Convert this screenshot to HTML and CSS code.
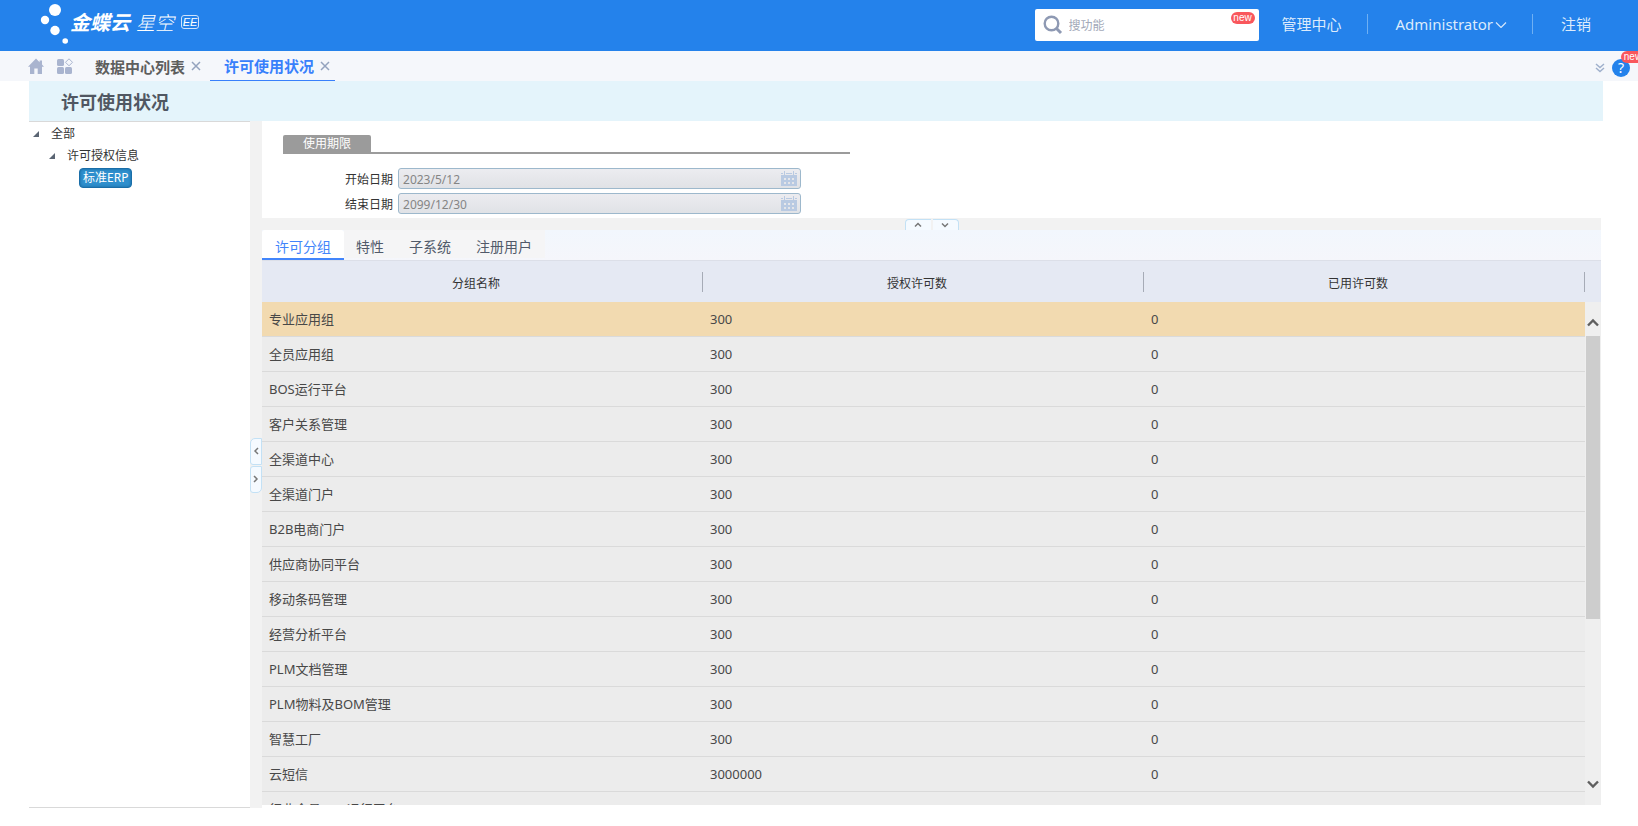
FILE: index.html
```
<!DOCTYPE html>
<html lang="zh-CN">
<head>
    <meta charset="UTF-8">
    <meta name="viewport" content="width=device-width, initial-scale=1.0">
    <title>许可使用状况</title>
    <link rel="stylesheet" href="styles.css">
</head>
<body>
    <!-- 顶部导航 -->
    <header class="header">
        <div class="logo">
            <svg class="logo-dots" width="28" height="44" viewBox="0 0 28 44" fill="#fff">
                <circle cx="15" cy="7" r="6"/>
                <circle cx="5" cy="17" r="4.2"/>
                <circle cx="15" cy="27.5" r="4.7"/>
                <circle cx="25.2" cy="38" r="2.8"/>
            </svg>
            <span class="logo-main">金蝶云</span>
            <span class="logo-sub">星空</span>
            <span class="logo-ee">EE</span>
        </div>
        <label class="search">
            <svg width="20" height="20" viewBox="0 0 20 20" fill="none" stroke="#8e99b3" stroke-width="2.4">
                <circle cx="8.5" cy="8.5" r="6.8"/>
                <path d="M13.5 13.5 L18 18" stroke-width="3"/>
            </svg>
            <input type="text" placeholder="搜功能" aria-label="搜功能">
            <span class="new search-new">new</span>
        </label>
        <nav class="user-nav">
            <a href="#">管理中心</a>
            <a href="#">Administrator
                <svg width="12" height="8" viewBox="0 0 12 8" fill="none" stroke="#d3e6fb" stroke-width="1.2"><path d="M1 2.5 L6 7.5 L11 2.5"/></svg>
            </a>
            <a href="#">注销</a>
        </nav>
    </header>

    <!-- 页签栏 -->
    <div class="page-tabs">
        <svg class="home" width="17" height="17" viewBox="0 0 17 17" fill="#a9b4cf"><path d="M8 0.5 L0 8.7 H2 V16 H6.3 V10.5 H9.7 V16 H14 V8.7 H16 L14 6.6 V2.5 H11.6 V4.2 Z"/></svg>
        <svg class="apps" width="17" height="17" viewBox="0 0 17 17" fill="#a9b4cf">
            <rect x="0" y="1" width="7" height="7" rx="1.5"/>
            <rect x="0" y="9" width="7" height="7" rx="1.5"/>
            <rect x="8" y="9" width="7" height="7" rx="1.5"/>
            <path d="M12 0.8 L15.5 4.3 L12 7.8 L8.5 4.3 Z" fill="none" stroke="#a9b4cf"/>
        </svg>
        <div class="page-tab">
            <a href="#">数据中心列表</a>
            <button type="button" aria-label="关闭"><svg width="10" height="10" viewBox="0 0 10 10" stroke="#94a3be" stroke-width="1.5"><path d="M1 1 L9 9 M9 1 L1 9"/></svg></button>
        </div>
        <div class="page-tab on">
            <a href="#">许可使用状况</a>
            <button type="button" aria-label="关闭"><svg width="10" height="10" viewBox="0 0 10 10" stroke="#94a3be" stroke-width="1.5"><path d="M1 1 L9 9 M9 1 L1 9"/></svg></button>
        </div>
        <div class="page-tools">
            <svg width="10" height="10" viewBox="0 0 10 10" fill="none" stroke="#9fb0cc" stroke-width="1.5"><path d="M1 1 L5 4.5 L9 1 M1 5 L5 8.5 L9 5"/></svg>
            <button type="button" class="help">?<span class="new help-new">new</span></button>
        </div>
    </div>

    <main class="main">
        <h1 class="title">许可使用状况</h1>
        <div class="content">
            <!-- 左侧树 -->
            <ul class="tree">
                <li><i class="arrow"></i>全部
                    <ul>
                        <li><i class="arrow"></i>许可授权信息
                            <ul>
                                <li><a href="#" class="selected">标准ERP</a></li>
                            </ul>
                        </li>
                    </ul>
                </li>
            </ul>

            <div class="split-v">
                <button type="button" aria-label="收起"><svg width="6" height="8" viewBox="0 0 6 8" fill="none" stroke="#777" stroke-width="1.5"><path d="M5 1 L2 4 L5 7"/></svg></button>
                <button type="button" aria-label="展开"><svg width="6" height="8" viewBox="0 0 6 8" fill="none" stroke="#777" stroke-width="1.5"><path d="M1 1 L4 4 L1 7"/></svg></button>
            </div>

            <section class="right">
                <form class="period">
                    <div class="legend"><span>使用期限</span></div>
                    <div class="field">
                        <label for="start">开始日期</label>
                        <div class="date">
                            <input type="text" id="start" value="2023/5/12" disabled>
                            <svg width="16" height="16"><use href="#calendar"/></svg>
                        </div>
                    </div>
                    <div class="field">
                        <label for="end">结束日期</label>
                        <div class="date">
                            <input type="text" id="end" value="2099/12/30" disabled>
                            <svg width="16" height="16"><use href="#calendar"/></svg>
                        </div>
                    </div>
                </form>

                <div class="split-h">
                    <button type="button" aria-label="收起"><svg width="8" height="6" viewBox="0 0 8 6" fill="none" stroke="#777" stroke-width="1.5"><path d="M1 4.5 L4 1.5 L7 4.5"/></svg></button>
                    <button type="button" aria-label="展开"><svg width="8" height="6" viewBox="0 0 8 6" fill="none" stroke="#777" stroke-width="1.5"><path d="M1 1.5 L4 4.5 L7 1.5"/></svg></button>
                </div>

                <div class="tabs">
                    <button type="button" class="on">许可分组</button>
                    <button type="button">特性</button>
                    <button type="button">子系统</button>
                    <button type="button">注册用户</button>
                </div>

                <div class="grid">
                    <div class="grid-body">
                        <table>
                            <thead>
                                <tr><th>分组名称</th><th>授权许可数</th><th>已用许可数</th></tr>
                            </thead>
                            <tbody>
                                <tr class="current"><td>专业应用组</td><td>300</td><td>0</td></tr>
                                <tr><td>全员应用组</td><td>300</td><td>0</td></tr>
                                <tr><td>BOS运行平台</td><td>300</td><td>0</td></tr>
                                <tr><td>客户关系管理</td><td>300</td><td>0</td></tr>
                                <tr><td>全渠道中心</td><td>300</td><td>0</td></tr>
                                <tr><td>全渠道门户</td><td>300</td><td>0</td></tr>
                                <tr><td>B2B电商门户</td><td>300</td><td>0</td></tr>
                                <tr><td>供应商协同平台</td><td>300</td><td>0</td></tr>
                                <tr><td>移动条码管理</td><td>300</td><td>0</td></tr>
                                <tr><td>经营分析平台</td><td>300</td><td>0</td></tr>
                                <tr><td>PLM文档管理</td><td>300</td><td>0</td></tr>
                                <tr><td>PLM物料及BOM管理</td><td>300</td><td>0</td></tr>
                                <tr><td>智慧工厂</td><td>300</td><td>0</td></tr>
                                <tr><td>云短信</td><td>3000000</td><td>0</td></tr>
                                <tr><td>行业全员BOS运行平台</td><td>300</td><td>0</td></tr>
                            </tbody>
                        </table>
                    </div>
                    <div class="scrollbar">
                        <svg width="12" height="10" viewBox="0 0 12 10" fill="none" stroke="#5f5f5f" stroke-width="2.4"><path d="M1 7.5 L6 2.5 L11 7.5"/></svg>
                        <div class="track"><div class="thumb"></div></div>
                        <svg width="12" height="10" viewBox="0 0 12 10" fill="none" stroke="#5f5f5f" stroke-width="2.4"><path d="M1 2.5 L6 7.5 L11 2.5"/></svg>
                    </div>
                </div>
            </section>
        </div>
    </main>

    <svg class="defs" width="0" height="0">
        <symbol id="calendar" viewBox="0 0 16 16">
            <path fill="#b9cae2" fill-rule="evenodd" d="M0 4 H16 V15 H0 Z M3 7 V9 H5 V7 Z M7 7 V9 H9 V7 Z M11 7 V9 H13 V7 Z M3 11 V13 H5 V11 Z M7 11 V13 H9 V11 Z M11 11 V13 H13 V11 Z"/>
            <path fill="#b9cae2" d="M0 2 H2 V3 H0 Z M3 0 H4 V4 H3 Z M5 2 H11 V3 H5 Z M12 0 H13 V4 H12 Z M14 2 H16 V3 H14 Z"/>
        </symbol>
    </svg>
</body>
</html>
```
FILE: styles.css
```
*{
    box-sizing: border-box;
}
body{
    margin: 0;
    height: 100vh;
    display: flex;
    flex-direction: column;
    overflow: hidden;
    background-color: #fff;
    color: #333;
    font-family: "Noto Sans", "Noto Sans CJK SC", sans-serif;
    font-size: 12px;
}
a{
    color: inherit;
    text-decoration: none;
}
button, input{
    font: inherit;
    color: inherit;
    border: 0;
    padding: 0;
    margin: 0;
    background: none;
}
ul{
    list-style: none;
    margin: 0;
    padding: 0;
}
svg{
    display: block;
    flex-shrink: 0;
}
.defs{
    position: absolute;
}
.new{
    width: 24px;
    height: 12px;
    border-radius: 6px;
    background-color: #f9575c;
    color: #fff;
    font: 10px/11px "Liberation Sans", sans-serif;
    text-align: center;
}

/* 顶部导航 */
.header{
    flex: none;
    height: 51px;
    display: flex;
    align-items: center;
    padding: 0 32px 0 40px;
    background-color: #2482eb;
    color: #fff;
}
.logo{
    display: flex;
    align-items: flex-start;
    margin-right: auto;
    height: 46px;
    font-family: "Noto Sans CJK SC", sans-serif;
    font-style: italic;
    line-height: 38px;
}
.logo-main{
    margin-left: 2px;
    font-size: 20px;
    font-weight: bold;
}
.logo-sub{
    margin-left: 6px;
    font-size: 19px;
    font-weight: 300;
}
.logo-ee{
    margin: 12px 0 0 7px;
    width: 18px;
    height: 14px;
    border: 1px solid #cfe3fb;
    border-radius: 3px;
    font: italic 11px/12px "Liberation Sans", sans-serif;
    text-align: center;
}
.search{
    position: relative;
    display: flex;
    align-items: center;
    width: 224px;
    height: 32px;
    margin-bottom: 1px;
    padding-left: 8px;
    border-radius: 2px;
    background-color: #fff;
}
.search input{
    width: 140px;
    margin-left: 6px;
    color: #333;
    outline: none;
}
.search input::placeholder{
    color: #a3a9b8;
}
.search-new{
    position: absolute;
    top: 3px;
    right: 4px;
}
.user-nav{
    display: flex;
    align-items: center;
    margin-bottom: 3px;
    color: #dcebfc;
    font-size: 15px;
    line-height: 20px;
}
.user-nav a{
    display: flex;
    align-items: center;
    gap: 2px;
    padding: 0 25px 0 28px;
    border-left: 1px solid #6fb0f3;
}
.user-nav a:first-child{
    padding: 0 25px 0 23px;
    border-left: 0;
}
.user-nav a:last-child{
    padding-right: 15px;
}

/* 页签栏 */
.page-tabs{
    flex: none;
    height: 30px;
    display: flex;
    align-items: center;
    padding-left: 28px;
    background-color: #f5f7fb;
}
.apps{
    margin: 0 12px;
}
.page-tab{
    display: flex;
    align-items: center;
    gap: 6px;
    height: 30px;
    margin-right: 4px;
    padding: 0 5px 0 9px;
    color: #5e5e5e;
    font-size: 15px;
    font-weight: bold;
}
.page-tab.on{
    height: 31px;
    margin-top: 1px;
    padding-left: 14px;
    border-bottom: 2px solid #3880fb;
    color: #3880fb;
}
.page-tools{
    display: flex;
    align-items: center;
    gap: 7px;
    margin-left: auto;
    padding: 4px 8px 0 0;
}
.help{
    position: relative;
    width: 18px;
    height: 18px;
    border-radius: 50%;
    background-color: #2482eb;
    color: #fff;
    font-size: 14px;
    line-height: 18px;
}
.help-new{
    position: absolute;
    left: 9px;
    top: -8px;
}

/* 内容区 */
.main{
    flex: 1;
    min-height: 0;
    display: flex;
    flex-direction: column;
    margin: 0 35px 18px 29px;
}
.title{
    flex: none;
    height: 40px;
    margin: 0;
    padding: 1px 0 0 32px;
    background-color: #e4f4fb;
    color: #505762;
    font-size: 18px;
    line-height: 40px;
}
.content{
    flex: 1;
    min-height: 0;
    display: flex;
    padding-right: 2px;
}
.tree{
    width: 221px;
    padding: 1px 0 0 4px;
    border-top: 1px solid #d9d9d9;
    border-bottom: 1px solid #d9d9d9;
    line-height: 22px;
}
.tree ul{
    padding-left: 16px;
}
.tree ul ul{
    padding-left: 30px;
}
.arrow{
    display: inline-block;
    margin-right: 12px;
    border-left: 6px solid transparent;
    border-bottom: 6px solid #5b6573;
    vertical-align: 1px;
}
.selected{
    display: inline-block;
    height: 20px;
    padding: 0 3px;
    border: 1px solid #1a6ea8;
    border-radius: 4px;
    background-color: #2f8fcd;
    box-shadow: inset 0 0 3px #14649c;
    color: #fff;
    line-height: 18px;
}

/* 分隔条 */
.split-v{
    width: 12px;
    display: flex;
    flex-direction: column;
    justify-content: center;
    gap: 1px;
    padding-top: 1px;
    background-color: #f2f2f2;
}
.split-v button, .split-h button{
    display: flex;
    align-items: center;
    justify-content: center;
    border: 1px solid #c3e1f5;
    background-color: #f5faff;
}
.split-v button{
    height: 27px;
    border-radius: 5px 0 0 3px;
}
.split-v button + button{
    border-radius: 3px 0 5px 3px;
}
.split-h{
    flex: none;
    height: 12px;
    display: flex;
    align-items: flex-end;
    justify-content: center;
    gap: 2px;
    background-color: #f2f2f2;
}
.split-h button{
    width: 26px;
    height: 11px;
    border-width: 1px 0 0 1px;
    border-radius: 4px 0 0 0;
}
.split-h button + button{
    border-width: 1px 1px 0 0;
    border-radius: 0 4px 0 0;
}

/* 使用期限 */
.right{
    flex: 1;
    min-width: 0;
    display: flex;
    flex-direction: column;
    padding-bottom: 3px;
}
.period{
    flex: none;
    height: 97px;
    padding: 14px 21px 0;
}
.legend{
    max-width: 567px;
    margin-bottom: 14px;
    border-bottom: 2px solid #9b9b9b;
}
.legend span{
    display: block;
    width: 88px;
    height: 17px;
    border-radius: 2px 2px 0 0;
    background-color: #9b9b9b;
    color: #fff;
    line-height: 18px;
    text-align: center;
}
.field{
    display: flex;
    align-items: center;
    gap: 5px;
    margin-bottom: 4px;
    padding-left: 62px;
}
.field label{
    padding-top: 1px;
}
.date{
    display: flex;
    align-items: center;
    width: 403px;
    height: 21px;
    padding: 1px 3px 0 4px;
    border: 1px solid #9db8cc;
    border-radius: 3px;
    background: linear-gradient(#ececf0, #e0e2e6);
}
.date input{
    flex: 1;
    color: #858585;
}

/* 页签 */
.tabs{
    flex: none;
    display: flex;
    height: 31px;
    border-bottom: 1px solid #dcdfe8;
    background: linear-gradient(#f2f7fd, #f5f6fb);
}
.tabs button{
    height: 28px;
    padding: 5px 13px 0 12px;
    background-color: #f5f5f6;
    color: #515a6a;
    font-size: 14px;
    line-height: 23px;
}
.tabs .on{
    height: 30px;
    padding: 5px 13px 0;
    border-bottom: 2px solid #4285fb;
    border-radius: 3px 3px 0 0;
    background-color: #fff;
    color: #4285fb;
}

/* 表格 */
.grid{
    flex: 1;
    min-height: 0;
    display: flex;
    background: linear-gradient(#e5e9f3 41px, #efefef 41px);
}
.grid-body{
    flex: 1;
    overflow: hidden;
}
table{
    width: 100%;
    table-layout: fixed;
    border-collapse: separate;
    border-spacing: 0;
}
th{
    height: 41px;
    padding: 2px 13px 0 0;
    background: linear-gradient(#a6abb6, #a6abb6) no-repeat right center / 1px 20px #e5e9f3;
    font-weight: normal;
}
td{
    height: 35px;
    padding: 0 7px;
    border-bottom: 1px solid #dadada;
    background-color: #ececec;
    color: #484848;
    font-size: 13px;
    line-height: 18px;
}
.current td{
    background-color: #f2dab0;
}
.scrollbar{
    width: 16px;
    display: flex;
    flex-direction: column;
    align-items: center;
    padding: 57px 1px 16px;
}
.track{
    flex: 1;
    width: 14px;
    margin: 8px 0;
}
.thumb{
    height: 65%;
    background-color: #cdcdcd;
}
```
